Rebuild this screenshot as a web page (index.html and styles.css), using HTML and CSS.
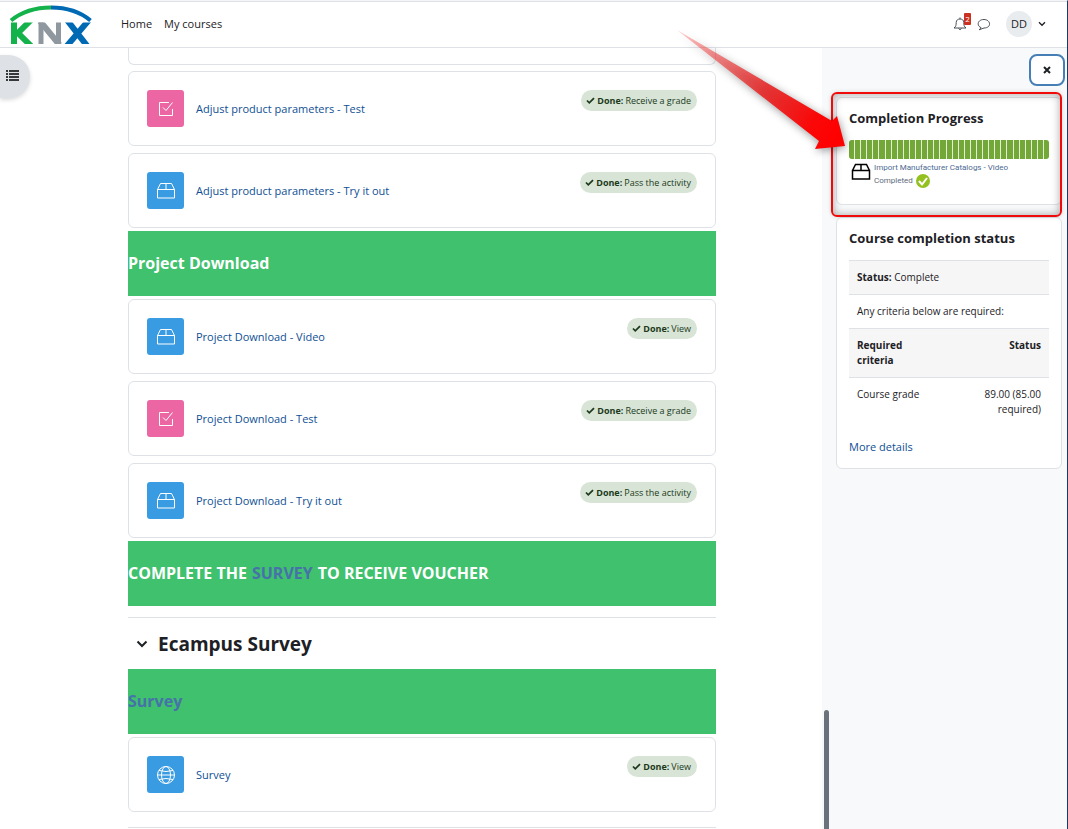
FILE: index.html
```html
<!DOCTYPE html>
<html lang="en">
<head>
<meta charset="utf-8">
<title>KNX eCampus</title>
<meta name="viewport" content="width=device-width, initial-scale=1">
<link rel="stylesheet" href="styles.css">
</head>
<body>
<svg class="defs" aria-hidden="true">
  <symbol id="quiz" viewBox="0 0 18 18"><path d="M12 2.500H2.500v13h13V9" /><path d="M6 7.500l3 3 6.500-8"/></symbol>
  <symbol id="box" viewBox="0 0 20 18"><path d="M1.500 7.500h17v8.500h-17zM1.500 7.500l3-6h11l3 6M10 1.500v6"/></symbol>
  <symbol id="globe" viewBox="0 0 20 20"><circle cx="10" cy="10" r="8.500"/><ellipse cx="10" cy="10" rx="4.500" ry="8.500"/><path d="M1.500 10h17M3 5.500q7 2 14 0M3 14.500q7-2 14 0"/></symbol>
  <symbol id="check" viewBox="0 0 10 8"><path d="M1 4l2.600 2.600L9 1.200"/></symbol>
  <symbol id="chevron" viewBox="0 0 12 8"><path d="M1.500 1.500L6 6l4.500-4.500"/></symbol>
</svg>

<header class="topbar">
  <a class="brand" href="#" aria-label="KNX">
    <svg viewBox="0 0 84 42">
      <defs><clipPath id="band"><path d="M0 19.500h84v21.500H0z"/></clipPath></defs>
      <path d="M2 17.500Q18 4.500 42 4.500" fill="none" stroke="#13b24b" stroke-width="4"/>
      <path d="M42 4.500Q66 4.500 81.500 17.500" fill="none" stroke="#0069b4" stroke-width="4"/>
      <g fill="none" stroke-width="6" clip-path="url(#band)">
        <path d="M5 17v26" stroke="#13b24b"/>
        <path d="M22 17L9 30l14 14" stroke="#13b24b"/>
        <path d="M32 17v26M49.500 17v26" stroke="#8f989f" stroke-width="5"/>
        <path d="M31 18l19.500 24" stroke="#8f989f"/>
        <path d="M58 17l21 27M80 17L57 44" stroke="#0069b4"/>
      </g>
    </svg>
  </a>
  <nav class="nav"><a href="#">Home</a><a href="#">My courses</a></nav>
  <div class="tools">
    <button class="plain bell" aria-label="Notifications">
      <svg viewBox="0 0 14 14" width="14" height="14"><path d="M1 11c2-1.500 2.200-3 2.200-5.500C3.200 3 5 2 7 2s3.800 1 3.800 3.500C10.800 8 11 9.500 13 11zM5.500 11.500q1.500 2.500 3 0M7 .5V2"/></svg>
      <span class="count">2</span>
    </button>
    <button class="plain chat" aria-label="Messages">
      <svg viewBox="0 0 14 14" width="14" height="14"><path d="M4 10.600C-.5 9 .2 2.500 7 2.500s8 8.500 0 8.500L2 12.800q1.700-1 2-2.200z"/></svg>
    </button>
    <button class="plain user" aria-label="User menu"><span class="avatar">DD</span>
      <svg class="caret" width="8" height="6"><use href="#chevron"/></svg></button>
  </div>
</header>

<div class="page">
  <button class="index-toggle" aria-label="Open course index">
    <svg viewBox="0 0 13 11" width="13" height="11"><path d="M0 1h2M3 1h10M0 4h2M3 4h10M0 7h2M3 7h10M0 10h2M3 10h10"/></svg>
  </button>

  <main class="course">
    <div class="activity cut"></div>
    <section class="group">
      <article class="activity"><span class="icon pink"><svg width="18" height="18"><use href="#quiz"/></svg></span><a href="#">Adjust product parameters - Test</a><span class="done"><svg width="9" height="7"><use href="#check"/></svg><b>Done:</b> Receive a grade</span></article>
      <article class="activity"><span class="icon"><svg width="20" height="18"><use href="#box"/></svg></span><a href="#">Adjust product parameters - Try it out</a><span class="done"><svg width="9" height="7"><use href="#check"/></svg><b>Done:</b> Pass the activity</span></article>
    </section>
    <h4 class="banner">Project Download</h4>
    <section class="group">
      <article class="activity"><span class="icon"><svg width="20" height="18"><use href="#box"/></svg></span><a href="#">Project Download - Video</a><span class="done"><svg width="9" height="7"><use href="#check"/></svg><b>Done:</b> View</span></article>
      <article class="activity"><span class="icon pink"><svg width="18" height="18"><use href="#quiz"/></svg></span><a href="#">Project Download - Test</a><span class="done"><svg width="9" height="7"><use href="#check"/></svg><b>Done:</b> Receive a grade</span></article>
      <article class="activity"><span class="icon"><svg width="20" height="18"><use href="#box"/></svg></span><a href="#">Project Download - Try it out</a><span class="done"><svg width="9" height="7"><use href="#check"/></svg><b>Done:</b> Pass the activity</span></article>
    </section>
    <h4 class="banner">COMPLETE THE <a href="#">SURVEY</a> TO RECEIVE VOUCHER</h4>
    <div class="section-head">
      <button class="plain" aria-label="Collapse section"><svg class="caret" width="12" height="8"><use href="#chevron"/></svg></button>
      <h3>Ecampus Survey</h3>
    </div>
    <h4 class="banner"><a href="#">Survey</a></h4>
    <section class="group">
      <article class="activity"><span class="icon"><svg width="20" height="20"><use href="#globe"/></svg></span><a href="#">Survey</a><span class="done"><svg width="9" height="7"><use href="#check"/></svg><b>Done:</b> View</span></article>
    </section>
    <hr class="rule">
  </main>

  <aside class="drawer">
    <span class="thumb"></span>
    <button class="close" aria-label="Close block drawer"><svg viewBox="0 0 8 8" width="8" height="8"><path d="M1 1l6 6M7 1L1 7"/></svg></button>
    <section class="block progress">
      <h5>Completion Progress</h5>
      <div class="bar" role="img" aria-label="All activities completed"><i></i><i></i><i></i><i></i><i></i><i></i><i></i><i></i><i></i><i></i><i></i><i></i><i></i><i></i><i></i><i></i><i></i><i></i><i></i><i></i><i></i><i></i><i></i><i></i><i></i><i></i><i></i><i></i><i></i><i></i><i></i><i></i><i></i></div>
      <div class="info">
        <svg class="pack" width="20" height="18"><use href="#box"/></svg>
        <div><a href="#">Import Manufacturer Catalogs - Video</a>
        <p>Completed <svg viewBox="0 0 14 14" width="14" height="14"><circle cx="7" cy="7" r="7" fill="#94c11f" stroke="none"/><path d="M3 7l3 3.500L11 4" fill="none" stroke="#fff" stroke-width="2"/></svg></p></div>
      </div>
      <span class="highlight"></span>
      <svg class="arrow" viewBox="0 0 190 140" width="190" height="140" aria-hidden="true">
        <defs><linearGradient id="fade" gradientUnits="userSpaceOnUse" x1="7" y1="10" x2="165" y2="120"><stop offset="0" stop-color="#f22" stop-opacity=".2"/><stop offset=".2" stop-color="#f04040" stop-opacity=".55"/><stop offset=".55" stop-color="#e62a2a" stop-opacity=".92"/><stop offset=".85" stop-color="#fa0808"/><stop offset="1" stop-color="#f00"/></linearGradient></defs>
        <path d="M7 10L162 101L167 96L175 126L145 129L149 121Z" fill="url(#fade)"/>
      </svg>
    </section>
    <section class="block">
      <h5>Course completion status</h5>
      <table>
        <tr><td colspan="2"><b>Status:</b> Complete</td></tr>
        <tr><td colspan="2">Any criteria below are required:</td></tr>
        <tr><th scope="col">Required criteria</th><th scope="col">Status</th></tr>
        <tr><td>Course grade</td><td>89.00 (85.00 required)</td></tr>
      </table>
      <a class="more" href="#">More details</a>
    </section>
  </aside>
</div>
</body>
</html>
```
FILE: styles.css
```css
* { box-sizing: border-box; }
body {
  margin: 0;
  height: 100vh;
  overflow: hidden;
  display: flex;
  flex-direction: column;
  font: 11px/15px "Open Sans", "Noto Sans", sans-serif;
  color: #1d2125;
  background: #fff;
  border-top: 1px solid #f4f5f6;
  border-right: 1px solid #1f3864;
}
a { color: #0f4f94; text-decoration: none; }
h3, h4, h5, p { margin: 0; }
svg { fill: none; stroke: currentColor; flex: none; }
.defs { position: absolute; width: 0; height: 0; }
.plain { border: 0; padding: 0; background: none; color: inherit; font: inherit; display: flex; align-items: center; }
.caret { stroke-width: 2; }

.topbar {
  flex: none;
  height: 47px;
  display: flex;
  align-items: center;
  padding: 0 21px 2px 9px;
  border-top: 1px solid #dee2e6;
  border-bottom: 1px solid #dee2e6;
}
.brand svg { display: block; width: 84px; height: 42px; }
.nav { display: flex; gap: 12px; margin-left: 28px; }
.nav a { color: #1d2125; }
.tools { margin-left: auto; display: flex; align-items: center; color: #4a5056; }
.bell { position: relative; }
.count {
  position: absolute;
  left: 11px;
  top: -4px;
  width: 7px;
  height: 12px;
  background: #ca3120;
  color: #fff;
  font-size: 8px;
  line-height: 12px;
  border-radius: 1px;
}
.chat { margin-left: 10px; }
.user { margin-left: 15px; gap: 6px; color: #1d2125; }
.avatar { width: 26px; height: 26px; border-radius: 50%; background: #e9ecef; line-height: 26px; }

.page { flex: 1; min-height: 0; display: flex; position: relative; }
.index-toggle {
  position: absolute;
  left: 0;
  top: 7px;
  width: 30px;
  height: 43px;
  border: 0;
  border-radius: 0 22px 22px 0;
  background: #dee2e6;
  box-shadow: 0 2px 4px rgba(0, 0, 0, .15);
  padding: 0 0 2px 6px;
  text-align: left;
}
.index-toggle svg { stroke-width: 1.5; display: block; }

.course { flex: 1; min-width: 0; padding: 0 106px 0 128px; overflow: hidden; }
.group { display: grid; gap: 7px; }
.activity {
  display: flex;
  align-items: center;
  padding: 18px;
  border: 1px solid #dee2e6;
  border-radius: 6px;
}
.cut { height: 17px; padding: 0; border-top: 0; border-radius: 0 0 6px 6px; margin-bottom: 6px; }
.icon {
  width: 37px;
  height: 37px;
  margin-right: 12px;
  border-radius: 3px;
  background: #399be2;
  color: #fff;
  display: flex;
  align-items: center;
  justify-content: center;
}
.icon.pink { background: #eb66a2; }
.done {
  margin-left: auto;
  align-self: flex-start;
  display: flex;
  align-items: center;
  gap: 2px;
  padding: 0 6px 0 5px;
  border-radius: 11px;
  background: #d7e4d6;
  color: #1c3a1b;
  font-size: 9px;
  line-height: 21px;
}
.done svg { stroke-width: 2; }
.banner {
  height: 65px;
  margin: 3px 0;
  padding-bottom: 2px;
  display: flex;
  align-items: center;
  gap: 5px;
  background: #3fc16e;
  color: #fff;
  font-size: 16px;
  line-height: 20px;
}
.banner a { color: #4672a9; }
.section-head {
  display: flex;
  align-items: center;
  gap: 10px;
  height: 52px;
  margin-top: 11px;
  padding-left: 8px;
  border-top: 1px solid #dee2e6;
}
.section-head h3 { font-size: 19px; line-height: 24px; }
.section-head + .banner { margin-top: 0; }
.rule { margin: 15px 0 0; border: 0; border-top: 1px solid #dee2e6; }

.drawer { position: relative; width: 245px; padding: 6px 5px 0 14px; background: #f8f9fa; }
.thumb { position: absolute; left: 2px; top: 662px; bottom: 0; width: 5px; border-radius: 3px 3px 0 0; background: #6a737b; }
.close {
  display: flex;
  align-items: center;
  justify-content: center;
  width: 36px;
  height: 32px;
  margin: 0 -3px 11px auto;
  border: 2px solid #467fb5;
  border-radius: 8px;
  background: #fff;
  color: #1d2125;
}
.close svg { stroke-width: 2; }
.block { position: relative; padding: 11px 12px 12px; background: #fff; border: 1px solid #dee2e6; border-radius: 6px; }
.block h5 { font-size: 13px; line-height: 18px; }
.progress { z-index: 1; height: 108px; margin-bottom: 12px; }
.bar { display: flex; gap: 1px; margin-top: 13px; height: 19px; border-radius: 3px; overflow: hidden; background: #e2eed6; }
.bar i { flex: 1; background: #73a839; }
.info { display: flex; gap: 3px; margin: 3px 0 0 2px; font: 8px/12px Roboto, "Open Sans", sans-serif; color: #5d6b7c; }
.info a { color: #4d6a92; }
.info p { display: flex; align-items: center; gap: 3px; }
.pack { color: #000; margin-top: 1px; stroke-width: 1.5; }
.highlight {
  position: absolute;
  inset: -6px -1px -13px -6px;
  border: 2px solid #f00a0a;
  border-radius: 6px;
  box-shadow: inset 0 0 8px rgba(0, 0, 0, .35), 0 0 4px rgba(0, 0, 0, .15);
  pointer-events: none;
}
.arrow { position: absolute; left: -167px; top: -78px; stroke: none; filter: drop-shadow(1px 2px 4px rgba(0, 0, 0, .4)); pointer-events: none; }

table { width: 100%; margin: 13px 0 13px; border-collapse: collapse; font-size: 10px; line-height: 15px; }
td, th { padding: 9px 8px; text-align: left; vertical-align: top; border-top: 1px solid #dee2e6; }
th, td { width: 50%; }
td + td, th + th { text-align: right; }
tr:nth-child(odd) { background: #f6f6f6; }
.more { display: block; margin-bottom: 2px; }
```
